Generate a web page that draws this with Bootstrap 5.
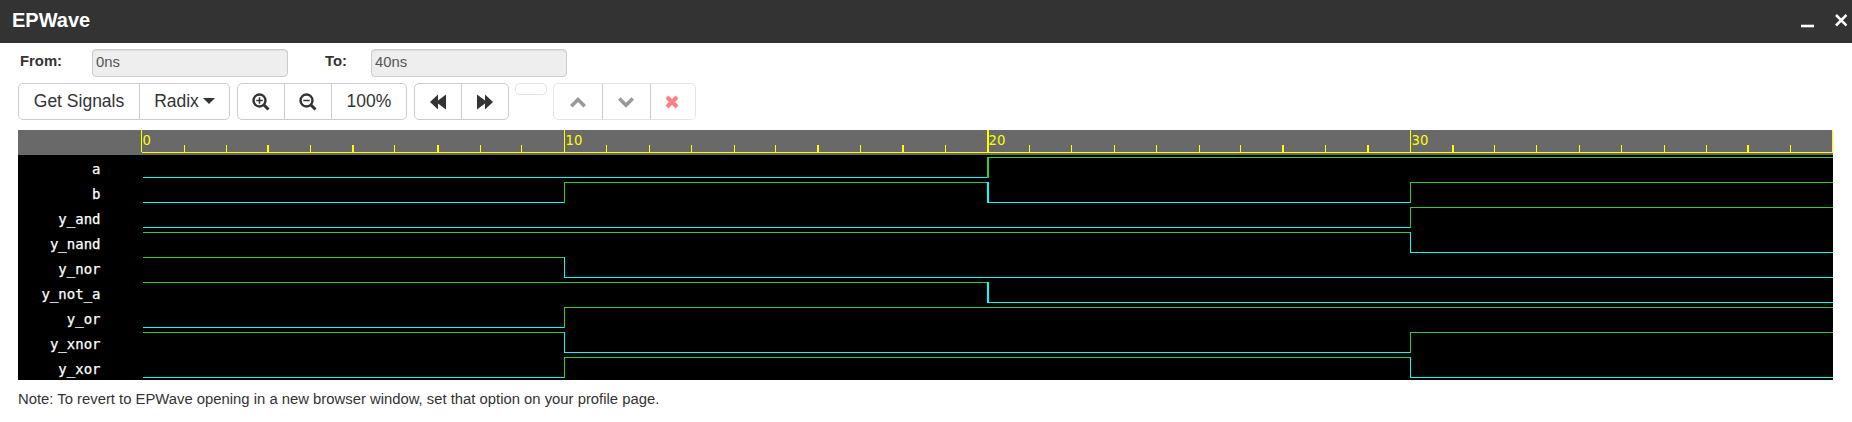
<!DOCTYPE html>
<html lang="en">
<head>
<meta charset="utf-8">
<title>EPWave</title>
<link rel="stylesheet" href="https://cdn.jsdelivr.net/npm/bootstrap@5.3.0/dist/css/bootstrap.min.css">
<style>
html,body{height:422px}
body{font-family:"Liberation Sans",Arial,sans-serif;font-size:14.84px;line-height:20px;color:#333;background:#fff;overflow:hidden}
.titlebar{height:43px;background:#333;padding:0 5px 4px 12px;color:#fff}
.titlebar h1{font-size:20px;line-height:24px;font-weight:700}
.range-row{height:40px;padding:6px 0 0 20px}
.range-row label{font-weight:700;line-height:20px;padding-top:2px}
.range-row .form-control{width:196px;height:28px;padding:0 3px 2px;font-size:14.84px;line-height:24px;color:#555;background:#eee;border:1px solid #ccc;border-radius:4px;box-shadow:inset 0 1px 1px rgba(0,0,0,.075)}
.lbl-from{width:72px}.lbl-to{width:46px;margin-left:37px}
.tools{height:47px;padding-left:18px}
.tools .btn-group{height:37px}
.tools .btn{font-size:17.5px;line-height:20px;color:#333;border:1px solid #ccc;border-radius:5px;padding:0 0 2px;background:#fff;display:flex;align-items:center;justify-content:center;flex:none}
.tools .off .btn{opacity:1;border-color:#e5e5e5}
.tools .off .btn+.btn{border-left-color:#ccc}
.tools .empty-btn{width:32px;height:12px;border:1px solid #e5e5e5;border-radius:5px;margin:0 6px}
.caret{border:5.5px solid transparent;border-top:6px solid #333;border-bottom:0;margin-left:4px}
.caret{width:0;height:0;border-left-width:6px;border-right-width:6px}
.tools .btn svg{position:relative;top:1px}
.wave{display:block;margin-left:18px}
.wave .sig{font:14px "DejaVu Sans Mono",monospace;fill:#fff;stroke:#fff;stroke-width:.25px;text-anchor:end}
.wave .num{font:13.2px "DejaVu Sans",sans-serif;fill:#ff0}
.note{padding:9px 0 0 18px}
</style>
</head>
<body>
<header class="titlebar d-flex align-items-center">
<h1 class="m-0 me-auto">EPWave</h1>
<svg width="60" height="39" viewBox="1787 0 60 39" fill="none" stroke="#fff"><path d="M1801 26h13" stroke-width="2.6"/><path d="M1836 15l10.500 10.500M1846.500 15l-10.500 10.500" stroke-width="2.500"/></svg>
</header>
<form class="range-row d-flex align-items-start">
<label class="lbl-from" for="from">From:</label><input id="from" class="form-control" value="0ns" readonly>
<label class="lbl-to" for="to">To:</label><input id="to" class="form-control" value="40ns" readonly>
</form>
<div class="tools d-flex align-items-start">
<div class="btn-group" style="margin-right:7px"><button class="btn" style="width:122px">Get Signals</button><button class="btn" style="width:91px">Radix<span class="caret"></span></button></div>
<div class="btn-group" style="margin-right:7px">
<button class="btn" style="width:48px" aria-label="Zoom in"><svg width="18" height="18" fill="none" stroke="#333"><circle cx="7.500" cy="7.500" r="6" stroke-width="2.400"/><path d="M12 12l4.500 4.500" stroke-width="3"/><path d="M4.300 7.500h6.400M7.500 4.300v6.400" stroke-width="1.500"/></svg></button>
<button class="btn" style="width:48px" aria-label="Zoom out"><svg width="18" height="18" fill="none" stroke="#333"><circle cx="7.500" cy="7.500" r="6" stroke-width="2.400"/><path d="M12 12l4.500 4.500" stroke-width="3"/><path d="M4.300 7.500h6.400" stroke-width="1.500"/></svg></button>
<button class="btn" style="width:76px">100%</button></div>
<div class="btn-group"><button class="btn" style="width:48px" aria-label="Backward"><svg width="17" height="16" fill="#333"><path d="M0 8L8 .5v6L16 .5v15L8 9.500v6z"/></svg></button><button class="btn" style="width:48px;padding-right:2px" aria-label="Forward"><svg width="17" height="16" fill="#333"><path d="M17 8L9 .5v6L1 .5v15L9 9.500v6z"/></svg></button></div>
<div class="empty-btn"></div>
<div class="btn-group off">
<button class="btn" style="width:50px" aria-label="Up"><svg width="16" height="12" fill="none" stroke="#999" stroke-width="3.600"><path d="M1.300 10.300L8 3.600l6.700 6.700"/></svg></button>
<button class="btn" style="width:49px;padding-right:1px" aria-label="Down"><svg width="16" height="12" fill="none" stroke="#999" stroke-width="3.600"><path d="M1.300 2.500L8 9.200l6.700-6.700"/></svg></button>
<button class="btn" style="width:46px;padding-right:2px" aria-label="Remove"><svg width="14" height="14" fill="none" stroke="#ff8080" stroke-width="4.200"><path d="M2 2l10 10M12 2L2 12"/></svg></button></div>
</div>
<svg class="wave" id="wave" width="1815" height="250" viewBox="18 130 1815 250" shape-rendering="crispEdges"></svg>
<p class="note m-0">Note: To revert to EPWave opening in a new browser window, set that option on your profile page.</p>
<script>
const GREEN='#32cd32',CYAN='#00ffff',YELLOW='#ffff00';
const rect=(x,y,w,h,c)=>`<rect x="${x}" y="${y}" width="${w}" height="${h}" fill="${c}"/>`;
let out=rect(18,130,1815,250,'#000')+rect(18,130,1815,25,'#696969');
// left edge of each ruler tick; wide ticks cover two pixels
const ticks=[141,184,226,267,310,352,394,437,480,521,564,606,649,691,734,775,817,860,902,945,987,1029,1071,1114,1156,1199,1240,1282,1325,1367,1410,1452,1494,1536,1579,1621,1664,1706,1747,1790,1832];
const wide=new Set([3,5,7,16,18,20,27,29,31,38]);
ticks.forEach((x,i)=>{const major=i%10===0;
 out+=rect(x,major?130:145,wide.has(i)?2:1,major?22:7,YELLOW);
 if(major&&i<40)out+=`<text class="num" x="${x+1.5}" y="144.500">${i}</text>`});
out+=rect(142,152,1691,1,YELLOW);
// signal values over each ten-nanosecond interval
const signals={a:'0011',b:'0101',y_and:'0001',y_nand:'1110',y_nor:'1000',y_not_a:'1100',y_or:'0111',y_xnor:'1001',y_xor:'0110'};
const edge=[143,564,987,1410,1833];
Object.entries(signals).forEach(([name,v],r)=>{const top=157+25*r;
 out+=`<text class="sig" x="100.500" y="${top+16.5}">${name}</text>`;
 for(let i=0;i<4;i++){const hi=v[i]==='1',c=hi?GREEN:CYAN;
  if(i&&v[i]!==v[i-1])out+=rect(edge[i],top,i===2?2:1,21,c);
  out+=rect(edge[i],hi?top:top+20,edge[i+1]-edge[i]+(i<3?1:0),1,c)}});
document.getElementById('wave').innerHTML=out;
</script>
<script src="https://cdn.jsdelivr.net/npm/bootstrap@5.3.0/dist/js/bootstrap.bundle.min.js"></script>
</body>
</html>
